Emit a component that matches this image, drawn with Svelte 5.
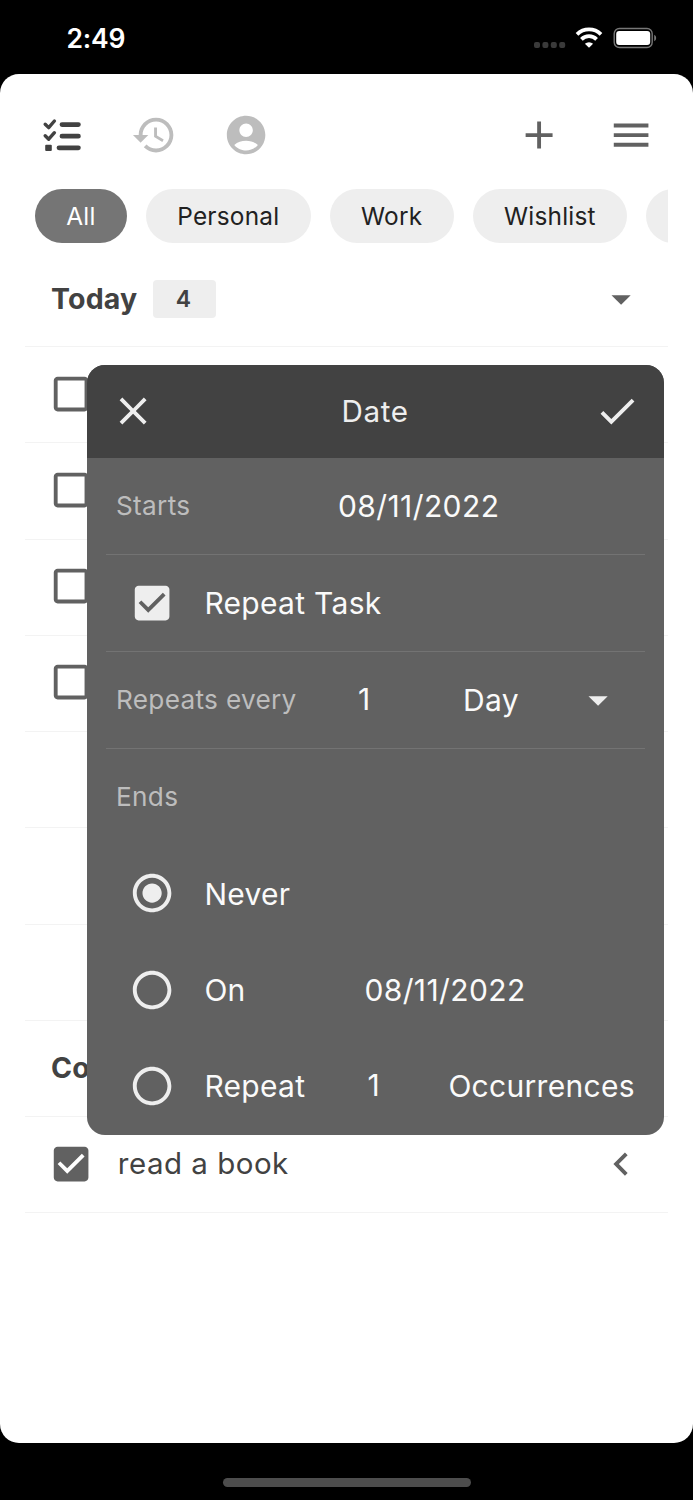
<script>
  // Filter chips at the top, the blank one is a new category and runs off the edge
  const categories = ["All", "Personal", "Work", "Wishlist", ""];
  let selected = $state("All");

  // Today's tasks, null is an empty row
  const rows = ["task", "task", "task", "task", null, null, null];

  let repeatTask = $state(true);
  let ends = $state("never");

  // 24x24 icon paths
  const icons = {
    history: "M13 3c-4.97 0-9 4.03-9 9H1l3.89 3.89.07.14L9 12H6c0-3.87 3.13-7 7-7s7 3.13 7 7-3.13 7-7 7c-1.93 0-3.68-.79-4.94-2.06l-1.42 1.42C8.27 19.99 10.51 21 13 21c4.97 0 9-4.03 9-9s-4.03-9-9-9zm-1 5v5l4.28 2.54.72-1.21-3.5-2.08V8H12z",
    account: "M12 2C6.48 2 2 6.48 2 12s4.48 10 10 10 10-4.48 10-10S17.52 2 12 2zm0 4c1.93 0 3.5 1.57 3.5 3.5S13.93 13 12 13s-3.5-1.57-3.5-3.5S10.07 6 12 6zm0 14c-2.03 0-4.43-.82-6.14-2.88C7.55 15.8 9.68 15 12 15s4.45.8 6.14 2.12C16.43 19.18 14.03 20 12 20z",
    add: "M19 13h-6v6h-2v-6H5v-2h6V5h2v6h6v2z",
    menu: "M3 18h18v-2H3v2zm0-5h18v-2H3v2zm0-7v2h18V6H3z",
    dropDown: "M7 10l5 5 5-5z",
    boxBlank: "M19 5v14H5V5h14m0-2H5c-1.1 0-2 .9-2 2v14c0 1.1.9 2 2 2h14c1.1 0 2-.9 2-2V5c0-1.1-.9-2-2-2z",
    boxChecked: "M19 3H5c-1.11 0-2 .9-2 2v14c0 1.1.89 2 2 2h14c1.11 0 2-.9 2-2V5c0-1.1-.89-2-2-2zm-9 14l-5-5 1.41-1.41L10 14.17l7.59-7.59L19 8l-9 9z",
    close: "M19 6.41L17.59 5 12 10.59 6.41 5 5 6.41 10.59 12 5 17.59 6.41 19 12 13.41 17.59 19 19 17.59 13.41 12z",
    check: "M9 16.17L4.83 12l-1.42 1.41L9 19 21 7l-1.41-1.41z",
    chevronLeft: "M15.41 7.41L14 6l-6 6 6 6 1.41-1.41L10.83 12z",
    radioOn: "M12 7c-2.76 0-5 2.24-5 5s2.24 5 5 5 5-2.24 5-5-2.24-5-5-5zm0-5C6.48 2 2 6.48 2 12s4.48 10 10 10 10-4.48 10-10S17.52 2 12 2zm0 18c-4.42 0-8-3.58-8-8s3.58-8 8-8 8 3.58 8 8-3.58 8-8 8z",
    radioOff: "M12 2C6.48 2 2 6.48 2 12s4.48 10 10 10 10-4.48 10-10S17.52 2 12 2zm0 18c-4.42 0-8-3.58-8-8s3.58-8 8-8 8 3.58 8 8-3.58 8-8 8z",
  };
</script>

{#snippet icon(name)}
  <svg class="icon" viewBox="0 0 24 24"><path d={icons[name]} /></svg>
{/snippet}

{#snippet radio(value)}
  <button class="radio" aria-label={value} onclick={() => (ends = value)}>
    {@render icon(ends === value ? "radioOn" : "radioOff")}
  </button>
{/snippet}

<div class="phone">
  <div class="status">
    <span class="time">2:49</span>
    <svg class="indicators" width="126" height="24" viewBox="0 0 126 24">
      <g fill="#3a3a3a">
        <rect x="4" y="15" width="6" height="6" rx="2" />
        <rect x="12.4" y="15" width="6" height="6" rx="2" />
        <rect x="20.8" y="15" width="6" height="6" rx="2" />
        <rect x="29.2" y="15" width="6" height="6" rx="2" />
      </g>
      <g fill="none" stroke="#fff" stroke-width="3.8">
        <path d="M47 7.3a17.3 17.3 0 0 1 24 0" />
        <path d="M51.4 12.3a10.8 10.8 0 0 1 15.2 0" />
      </g>
      <path d="M59 20.8l-4.1-4a5.9 5.9 0 0 1 8.2 0z" fill="#fff" />
      <rect x="84.2" y="1.5" width="38" height="19" rx="5.2" fill="none" stroke="#777" stroke-width="1.4" />
      <rect x="86.2" y="3.9" width="34" height="14.2" rx="3" fill="#fff" />
      <path d="M124.2 7.8v6.4q2-1 2-3.2t-2-3.2z" fill="#777" />
    </svg>
  </div>

  <main>
    <header>
      <svg class="tasks" width="40" height="32" viewBox="0 0 40 32">
        <g fill="none" stroke="#424242" stroke-linecap="round" stroke-linejoin="round">
          <path d="M3.2 6.2l3.5 3.4L12.4 3M3.2 17.8l3.5 3.4 5.7-6.5" stroke-width="3.4" />
          <path d="M20 6.6h16.4M20 18.2h16.4M17 29.8h19.4" stroke-width="4.8" />
        </g>
        <rect x="3.2" y="26.7" width="6.6" height="6.4" rx="1" fill="#424242" />
      </svg>
      <span class="faded">{@render icon("history")}</span>
      <span class="faded">{@render icon("account")}</span>
      <span class="add">{@render icon("add")}</span>
      <span>{@render icon("menu")}</span>
    </header>

    <div class="chips">
      {#each categories as category}
        <button class="chip" class:active={selected === category} onclick={() => (selected = category)}>
          {category}
        </button>
      {/each}
    </div>

    <div class="section today">
      <h2>Today</h2>
      <span class="count">4</span>
      <span class="end">{@render icon("dropDown")}</span>
    </div>
    {#each rows as row}
      <div class="row">
        {#if row}{@render icon("boxBlank")}{/if}
      </div>
    {/each}
    <div class="row section">
      <h2>Completed</h2>
    </div>
    <div class="row">
      {@render icon("boxChecked")}
      <span class="name">read a book</span>
      <span class="end">{@render icon("chevronLeft")}</span>
    </div>

    <div class="dialog">
      <div class="title">
        {@render icon("close")}
        <span>Date</span>
        {@render icon("check")}
      </div>
      <div class="field">
        <span class="label">Starts</span>
        <span class="date">08/11/2022</span>
      </div>
      <div class="field">
        <button class="radio" aria-label="Repeat Task" onclick={() => (repeatTask = !repeatTask)}>
          {@render icon(repeatTask ? "boxChecked" : "boxBlank")}
        </button>
        <span class="repeat-task">Repeat Task</span>
      </div>
      <div class="field">
        <span class="label">Repeats every</span>
        <span class="number">1</span>
        <span class="unit">Day</span>
        <span class="arrow">{@render icon("dropDown")}</span>
      </div>
      <div class="field plain">
        <span class="label">Ends</span>
      </div>
      <div class="field plain">
        {@render radio("never")}
        <span class="option">Never</span>
      </div>
      <div class="field plain">
        {@render radio("on")}
        <span class="option">On</span>
        <span class="date">08/11/2022</span>
      </div>
      <div class="field plain">
        {@render radio("after")}
        <span class="option">Repeat</span>
        <span class="number">1</span>
        <span class="occurrences">Occurrences</span>
      </div>
    </div>
  </main>

  <div class="home"></div>
</div>

<style>
  :global(body) {
    background: #000;
  }

  .phone {
    width: 693px;
    height: 1500px;
    display: flex;
    flex-direction: column;
    background: #000;
    font-family: Inter, "Liberation Sans", sans-serif;
    color: #424242;
    overflow: hidden;
  }

  button {
    border: 0;
    padding: 0;
    background: none;
    color: inherit;
    font: inherit;
  }

  .icon {
    display: block;
    flex: none;
    width: 46.2px;
    height: 46.2px;
    fill: currentColor;
  }

  .status {
    height: 73.5px;
    flex: none;
    display: flex;
    justify-content: space-between;
    padding: 0 37.4px 0 66.4px;
    box-sizing: border-box;
    color: #fff;
  }

  .time {
    margin-top: 21px;
    font-size: 26.5px;
    line-height: 34px;
    font-weight: 600;
    letter-spacing: -0.2px;
  }

  .indicators {
    margin-top: 27px;
    overflow: visible;
  }

  main {
    position: relative;
    height: 1369px;
    flex: none;
    box-sizing: border-box;
    padding: 0 25px;
    background: #fff;
    border-radius: 19px;
  }

  header {
    display: flex;
    align-items: center;
    height: 124px;
    padding-left: 17px;
    padding-right: 13.8px;
    box-sizing: border-box;
    color: #616161;
  }

  .tasks {
    margin-right: 7px;
    margin-bottom: 4px;
    overflow: visible;
  }

  .faded {
    margin-left: 45.8px;
    color: #bdbdbd;
  }

  .faded:nth-of-type(1) {
    margin-left: 42px;
  }

  .add {
    margin-left: auto;
    margin-right: 46px;
  }

  .chips {
    display: flex;
    margin-top: -8.2px;
    padding-left: 10px;
    gap: 19.3px;
    overflow: hidden;
  }

  .chip {
    flex: none;
    height: 53.8px;
    padding: 0 31.2px;
    border-radius: 27px;
    background: #eee;
    color: #212121;
    font-size: 24.4px;
    letter-spacing: 0.23px;
  }

  .chip.active {
    background: #757575;
    color: #fff;
  }

  .section,
  .row {
    display: flex;
    align-items: center;
    box-sizing: border-box;
    border-bottom: 1.6px solid #f3f3f3;
    padding: 0 23.6px 2px 22.6px;
  }

  .row {
    height: 96.25px;
  }

  .today {
    height: 104px;
    padding-top: 8px;
    padding-bottom: 0;
    padding-left: 26px;
  }

  .row.section {
    padding-left: 26px;
  }

  h2 {
    margin: 0;
    font-size: 28.5px;
    font-weight: 700;
    letter-spacing: 0.2px;
  }

  .count {
    width: 63px;
    margin-left: 15.4px;
    border-radius: 4px;
    background: #eee;
    font-size: 23px;
    font-weight: 600;
    line-height: 38px;
    text-align: center;
    text-indent: -2px;
  }

  .row > .icon {
    color: #616161;
  }

  .name {
    margin-left: 24px;
    padding-bottom: 2px;
    font-size: 29.5px;
    letter-spacing: 0.5px;
  }

  .end {
    margin-left: auto;
    color: #616161;
  }

  .dialog {
    position: absolute;
    top: 291.5px;
    left: 87px;
    width: 577px;
    height: 769.5px;
    border-radius: 18px;
    background: #616161;
    color: #eee;
    overflow: hidden;
  }

  .title {
    display: flex;
    align-items: center;
    justify-content: space-between;
    height: 92.5px;
    padding: 0 23.4px 0 22.6px;
    box-sizing: border-box;
    background: #424242;
    font-size: 29.6px;
    letter-spacing: 0.6px;
  }

  .field {
    display: flex;
    align-items: center;
    height: 97px;
    margin: 0 19px;
    box-sizing: border-box;
    padding-top: 1px;
    border-bottom: 1.6px solid #737373;
    color: #fafafa;
    font-size: 30px;
    letter-spacing: 0.3px;
    white-space: nowrap;
  }

  .field.plain {
    height: 96.4px;
    border-bottom: 0;
  }

  .label {
    width: 223px;
    padding-left: 10px;
    padding-bottom: 2px;
    box-sizing: border-box;
    color: #bdbdbd;
    font-size: 26.2px;
    letter-spacing: 0.3px;
  }

  .radio {
    margin-left: 22.8px;
    margin-right: 29.4px;
    color: #eee;
  }

  .date {
    letter-spacing: 0.4px;
  }

  .label + .date {
    margin-left: 9px;
  }

  .number {
    padding-bottom: 3px;
  }

  .label + .number {
    width: 134px;
    padding-left: 29px;
    box-sizing: border-box;
  }

  .unit {
    width: 112px;
  }

  .arrow {
    color: #eee;
  }

  .option {
    width: 160px;
  }

  .option + .number {
    width: 84px;
    padding-left: 3px;
    box-sizing: border-box;
  }

  .home {
    width: 248px;
    height: 9px;
    margin: 35px auto 0;
    border-radius: 5px;
    background: #4d4d4d;
  }
</style>
